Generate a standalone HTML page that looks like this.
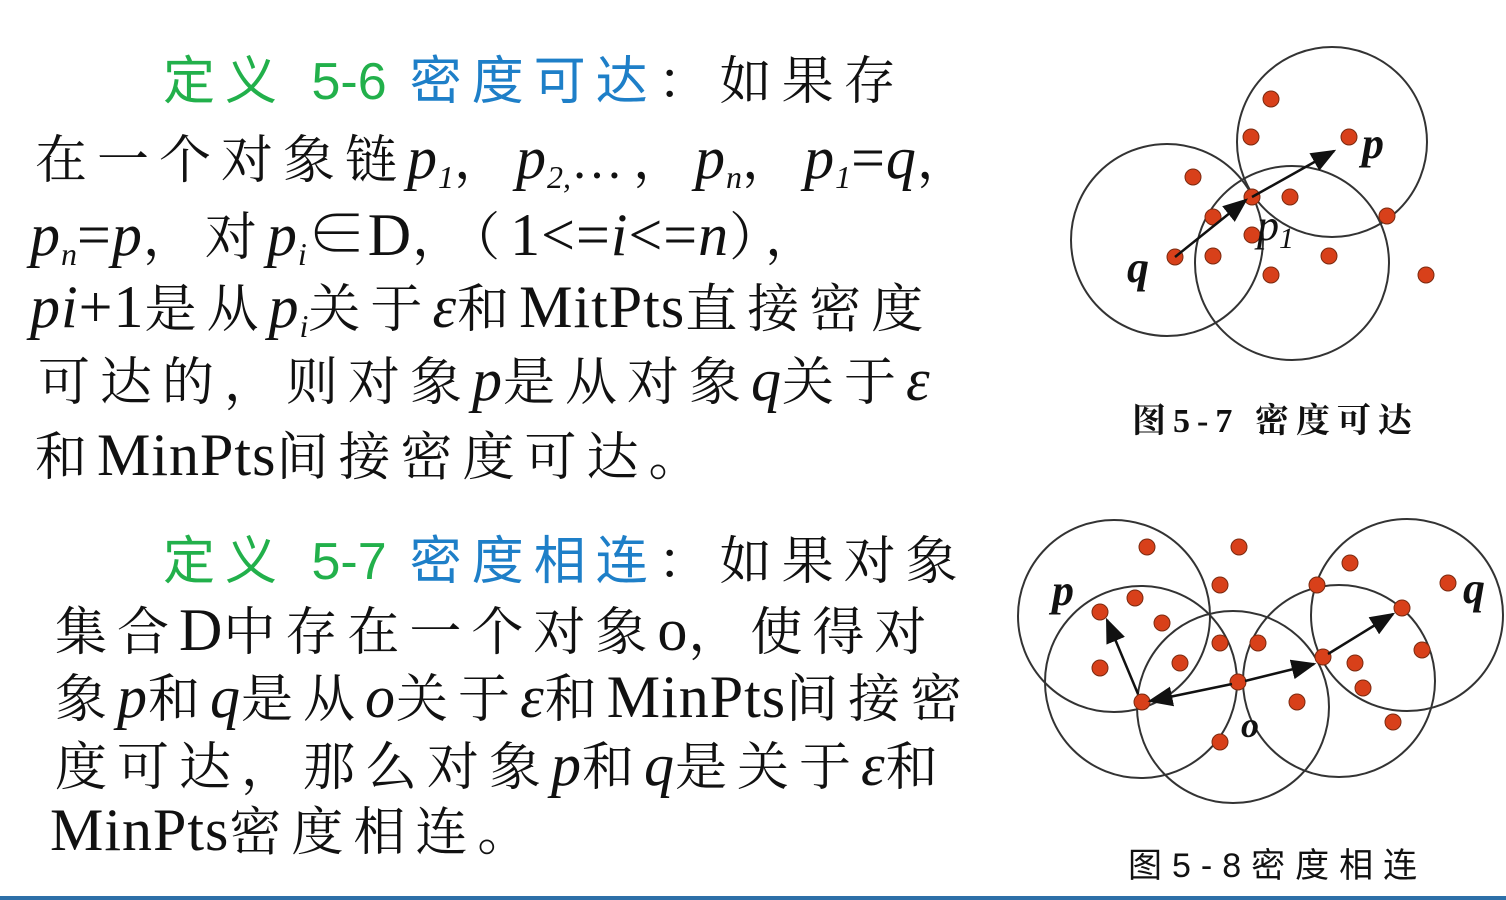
<!DOCTYPE html>
<html><head><meta charset="utf-8"><style>
body{margin:0;width:1506px;height:900px;background:#fff;position:relative;overflow:hidden;font-family:"Liberation Serif","Noto Serif CJK SC",serif;color:#111}
.l{position:absolute;white-space:nowrap;font-size:52px;line-height:60px;letter-spacing:10px}
.g{color:#22b04b;font-family:"Liberation Sans","Noto Sans CJK SC",sans-serif}
.b{color:#1e7fc8;font-family:"Liberation Sans","Noto Sans CJK SC",sans-serif}
.g .e{font-size:52px;letter-spacing:0}
.e{letter-spacing:1px;font-size:60px}
i{font-style:italic;letter-spacing:1px;font-size:60px}
sub{font-size:32px;vertical-align:-10px;line-height:0;font-style:italic;letter-spacing:0}
.bar{position:absolute;left:0;top:896px;width:1506px;height:4px;background:#2d6fa8}
</style></head><body>
<div class="l" style="left:163px;top:52px"><span class="g">定义 <span class="e">5-6</span></span> <span class="b">密度可达</span>：如果存</div>
<div class="l" style="left:35px;top:128px">在一个对象链<i>p</i><sub>1</sub>，<i>p</i><sub>2,</sub>…，<i>p</i><sub>n</sub>，<i>p</i><sub>1</sub><span class="e">=</span><i>q</i>，</div>
<div class="l" style="left:30px;top:205px"><i>p</i><sub>n</sub><span class="e">=</span><i>p</i>，对<i>p</i><sub>i</sub><span class="e">∈D</span>，（<span class="e">1&lt;=</span><i>i</i><span class="e">&lt;=</span><i>n</i>），</div>
<div class="l" style="left:30px;top:277px"><i>pi</i><span class="e">+1</span>是从<i>p</i><sub>i</sub>关于<i>ε</i>和<span class="e">MitPts</span>直接密度</div>
<div class="l" style="left:38px;top:350px">可达的，则对象<i>p</i>是从对象<i>q</i>关于<i>ε</i></div>
<div class="l" style="left:35px;top:425px">和<span class="e">MinPts</span>间接密度可达。</div>
<div class="l" style="left:163px;top:532px"><span class="g">定义 <span class="e">5-7</span></span> <span class="b">密度相连</span>：如果对象</div>
<div class="l" style="left:55px;top:600px">集合<span class="e">D</span>中存在一个对象<span class="e">o</span>，使得对</div>
<div class="l" style="left:55px;top:667px">象<i>p</i>和<i>q</i>是从<i>o</i>关于<i>ε</i>和<span class="e">MinPts</span>间接密</div>
<div class="l" style="left:55px;top:735px">度可达，那么对象<i>p</i>和<i>q</i>是关于<i>ε</i>和</div>
<div class="l" style="left:50px;top:800px"><span class="e">MinPts</span>密度相连。</div>

<svg width="1506" height="900" style="position:absolute;left:0;top:0" font-family="Liberation Serif">
<defs><marker id="a" markerWidth="10" markerHeight="8" refX="9" refY="4" orient="auto"><path d="M0,0L10,4L0,8z" fill="#111"/></marker></defs>
<g fill="none" stroke="#333" stroke-width="2">
<circle cx="1167" cy="240" r="96"/><circle cx="1332" cy="142" r="95"/><circle cx="1292" cy="263" r="97"/>
<circle cx="1114" cy="616" r="96"/><circle cx="1141" cy="682" r="96"/><circle cx="1233" cy="707" r="96"/><circle cx="1339" cy="681" r="96"/><circle cx="1407" cy="615" r="96"/>
</g>
<g fill="#d8401a" stroke="#7a2a10" stroke-width="1">
<circle cx="1271" cy="99" r="8"/><circle cx="1251" cy="137" r="8"/><circle cx="1349" cy="137" r="8"/><circle cx="1193" cy="177" r="8"/><circle cx="1252" cy="197" r="8"/><circle cx="1290" cy="197" r="8"/><circle cx="1213" cy="217" r="8"/><circle cx="1387" cy="216" r="8"/><circle cx="1252" cy="235" r="8"/><circle cx="1213" cy="256" r="8"/><circle cx="1329" cy="256" r="8"/><circle cx="1175" cy="257" r="8"/><circle cx="1271" cy="275" r="8"/><circle cx="1426" cy="275" r="8"/>
<circle cx="1147" cy="547" r="8"/><circle cx="1239" cy="547" r="8"/><circle cx="1220" cy="585" r="8"/><circle cx="1135" cy="598" r="8"/><circle cx="1100" cy="612" r="8"/><circle cx="1162" cy="623" r="8"/><circle cx="1350" cy="563" r="8"/><circle cx="1317" cy="585" r="8"/><circle cx="1448" cy="583" r="8"/><circle cx="1402" cy="608" r="8"/><circle cx="1220" cy="643" r="8"/><circle cx="1258" cy="643" r="8"/><circle cx="1180" cy="663" r="8"/><circle cx="1100" cy="668" r="8"/><circle cx="1422" cy="650" r="8"/><circle cx="1323" cy="657" r="8"/><circle cx="1355" cy="663" r="8"/><circle cx="1363" cy="688" r="8"/><circle cx="1238" cy="682" r="8"/><circle cx="1142" cy="702" r="8"/><circle cx="1297" cy="702" r="8"/><circle cx="1393" cy="722" r="8"/><circle cx="1220" cy="742" r="8"/>
</g>
<g stroke="#111" stroke-width="2.5" marker-end="url(#a)">
<line x1="1175" y1="257" x2="1246" y2="200"/><line x1="1252" y1="197" x2="1334" y2="151"/>
<line x1="1138" y1="694" x2="1107" y2="620"/><line x1="1232" y1="684" x2="1150" y2="701"/><line x1="1245" y1="681" x2="1314" y2="664"/><line x1="1328" y1="654" x2="1393" y2="614"/>
</g>
<g font-style="italic" font-weight="bold" font-size="44" fill="#111">
<text x="1127" y="282">q</text><text x="1362" y="158">p</text><text x="1257" y="240" font-weight="normal">p<tspan font-size="30" dy="8">1</tspan></text>
<text x="1052" y="605">p</text><text x="1463" y="603">q</text><text x="1241" y="737" font-size="36">o</text>
</g>
</svg>
<div style="position:absolute;left:1132px;top:393px;font-size:34px;font-weight:bold;font-family:'Liberation Serif','Noto Serif CJK SC',serif;letter-spacing:7px;white-space:nowrap">图5-7 密度可达</div>
<div style="position:absolute;left:1128px;top:838px;font-size:34px;font-family:'Liberation Sans','Noto Sans CJK SC',sans-serif;letter-spacing:10px;white-space:nowrap">图5-8密度相连</div>
<div class="bar"></div>
</body></html>
